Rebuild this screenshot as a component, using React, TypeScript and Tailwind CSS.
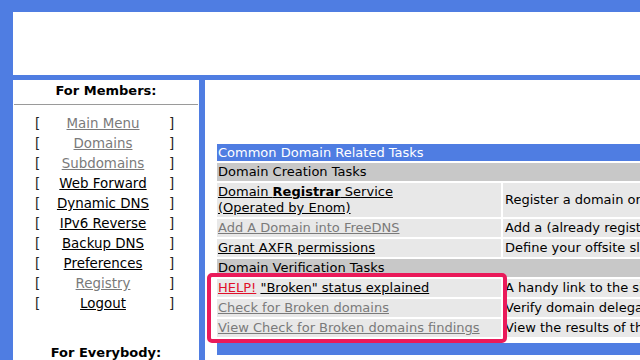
import React from "react";

const menu: { label: string; visited?: boolean }[] = [
  { label: "Main Menu", visited: true },
  { label: "Domains", visited: true },
  { label: "Subdomains", visited: true },
  { label: "Web Forward" },
  { label: "Dynamic DNS" },
  { label: "IPv6 Reverse" },
  { label: "Backup DNS" },
  { label: "Preferences" },
  { label: "Registry", visited: true },
  { label: "Logout" },
];

export default function App() {
  const font = { fontFamily: '"DejaVu Sans", Verdana, sans-serif' };
  return (
    <div
      className="relative w-[640px] h-[360px] overflow-hidden bg-[#4f7de2] text-[13px] text-black"
      style={font}
    >
      <div className="pt-[12px] pl-[13px]">
        <div className="h-[63px] bg-white" />
        <div className="mt-[5px] flex gap-[6px]">
          <div className="w-[186px] h-[290px] shrink-0 bg-white">
            <div className="h-[20px] pt-[1px] flex items-center justify-center font-bold text-[13px]">
              For Members:
            </div>
            <div className="mt-[4px] mx-[1px] h-[1px] bg-[#9a9a9a]" />
            <div className="mt-[9px] flex flex-col">
              {menu.map((m) => (
                <div key={m.label} className="h-[20px] flex items-center leading-[20px] text-[13.4px]">
                  <span className="w-[24px] pl-[22px] text-[#222]">[</span>
                  <span className="flex-1 text-center">
                    <a
                      className={
                        "underline " + (m.visited ? "text-[#7a7a7a]" : "text-black")
                      }
                    >
                      {m.label}
                    </a>
                  </span>
                  <span className="w-[30px] text-[#222]">]</span>
                </div>
              ))}
            </div>
            <div className="mt-[29px] text-center font-bold">For Everybody:</div>
          </div>
          <div className="flex-1 h-[290px] bg-white pl-[10px] pt-[62px] overflow-hidden">
            <table className="w-[560px] border-separate border-spacing-[2px] text-[13px] leading-[16px]">
              <tbody>
                <tr>
                  <td colSpan={2} className="bg-[#4f7de2] text-white h-[17px] px-[1px]">
                    Common Domain Related Tasks
                  </td>
                </tr>
                <tr>
                  <td colSpan={2} className="bg-[#c8c8c8] h-[18px] px-[1px]">
                    Domain Creation Tasks
                  </td>
                </tr>
                <tr>
                  <td className="bg-[#e8e8e8] w-[284px] px-[1px] h-[34px]">
                    <a className="underline">
                      Domain <b>Registrar</b> Service
                      <br />
                      (Operated by Enom)
                    </a>
                  </td>
                  <td className="bg-[#e8e8e8] px-[2px] whitespace-nowrap">
                    Register a domain or transfer one in
                  </td>
                </tr>
                <tr>
                  <td className="bg-[#e8e8e8] px-[1px] h-[18px]">
                    <a className="underline text-[#7a7a7a]">Add A Domain into FreeDNS</a>
                  </td>
                  <td className="bg-[#e8e8e8] px-[2px] whitespace-nowrap">
                    Add a (already registered) domain
                  </td>
                </tr>
                <tr>
                  <td className="bg-[#e8e8e8] px-[1px] h-[18px]">
                    <a className="underline">Grant AXFR permissions</a>
                  </td>
                  <td className="bg-[#e8e8e8] px-[2px] whitespace-nowrap">
                    Define your offsite slave servers
                  </td>
                </tr>
                <tr>
                  <td colSpan={2} className="bg-[#c8c8c8] h-[18px] px-[1px]">
                    Domain Verification Tasks
                  </td>
                </tr>
                <tr>
                  <td className="bg-[#e8e8e8] px-[1px] h-[18px]">
                    <a className="underline text-[#e0102a]">HELP!</a>{" "}
                    <a className="underline">"Broken" status explained</a>
                  </td>
                  <td className="bg-[#e8e8e8] px-[2px] whitespace-nowrap">
                    A handy link to the site help
                  </td>
                </tr>
                <tr>
                  <td className="bg-[#e8e8e8] px-[1px] h-[18px]">
                    <a className="underline text-[#7a7a7a]">Check for Broken domains</a>
                  </td>
                  <td className="bg-[#e8e8e8] px-[2px] whitespace-nowrap">
                    Verify domain delegation
                  </td>
                </tr>
                <tr>
                  <td className="bg-[#e8e8e8] px-[1px] h-[18px]">
                    <a className="underline text-[#7a7a7a]">
                      View Check for Broken domains findings
                    </a>
                  </td>
                  <td className="bg-[#e8e8e8] px-[2px] whitespace-nowrap">
                    View the results of the check
                  </td>
                </tr>
                <tr>
                  <td colSpan={2} className="h-[2px]" />
                </tr>
                <tr>
                  <td colSpan={2} className="bg-[#4f7de2] h-[12px]" />
                </tr>
              </tbody>
            </table>
          </div>
        </div>
      </div>
      <div className="absolute left-[207px] top-[273px] w-[300px] h-[70px] rounded-[5px] border-[4px] border-[#ea1a5a]" />
    </div>
  );
}
